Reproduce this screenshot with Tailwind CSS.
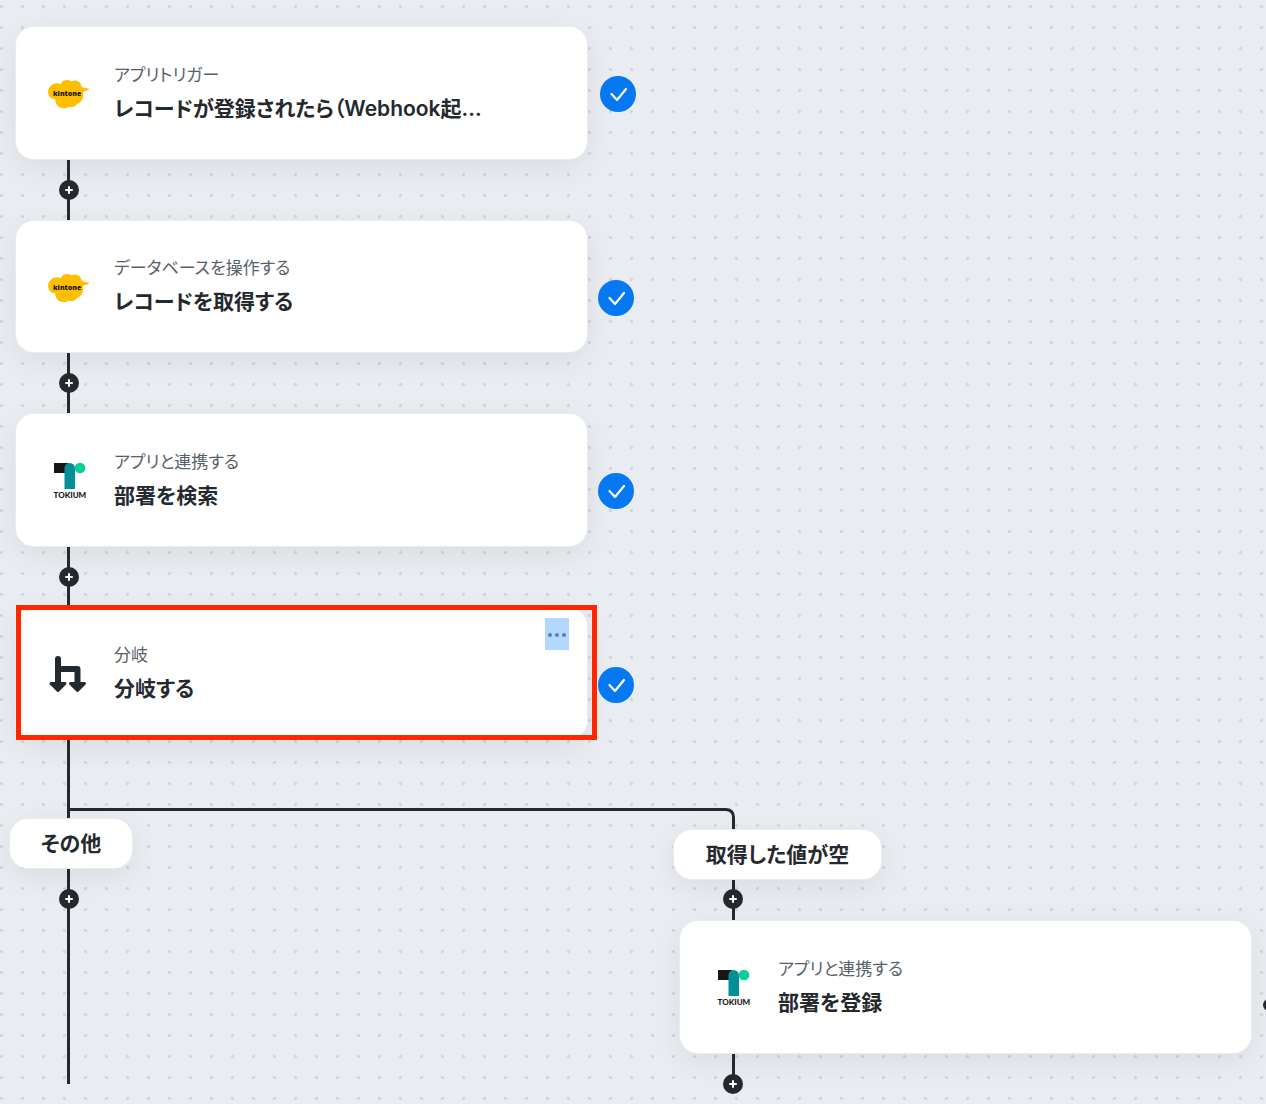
<!DOCTYPE html>
<html lang="ja">
<head>
<meta charset="utf-8">
<meta name="viewport" content="width=device-width, initial-scale=1">
<title>フロー</title>
<script src="https://cdn.jsdelivr.net/npm/@tailwindcss/browser@4"></script>
</head>
<body class="bg-[#e9ecf1]">
<svg class="hidden" aria-hidden="true">
  <symbol id="kintone" viewBox="0 0 44 44">
    <g transform="translate(0 2)">
    <path fill="#ffbf00" d="M12.500 11.200C14 7.200 20 5.600 23.500 8.600C27.500 6 33 8.500 33.300 13.200C35.500 15.300 38 14.900 40.800 15.400C42 15.700 41 16.600 39.500 17.200C37.500 18 35.700 18.200 34.800 19C35.600 24 34.800 28.800 29 31C27.500 34.200 23.500 34.600 21 33.400C17 36.800 8.500 35.300 7.500 28.500C7.300 27.600 7.200 26.800 7.200 26.200C2 26.500-.4 21.500 .2 17.500C1 12.300 7.500 8.500 12.500 11.200Z"/>
    <text x="5" y="22.500" font-family="Open Sans, sans-serif" font-size="7" font-weight="800" fill="#1d1a10">kintone</text>
    </g>
  </symbol>
  <symbol id="tokium" viewBox="0 0 44 44">
    <path fill="#181614" d="M6 5h14v10H6z"/>
    <path fill="#028f98" d="M16.500 31V10.200a5.250 5.250 0 0 1 10.500 0V31z"/>
    <circle cx="32" cy="10" r="5.300" fill="#06cf9a"/>
    <text x="5.500" y="40" font-family="Lato, sans-serif" font-size="8" font-weight="900" fill="#181614">TOKIUM</text>
  </symbol>
  <symbol id="branch" viewBox="0 0 40 40">
    <path fill="none" stroke="#24292e" stroke-width="6" stroke-linecap="round" d="M10 5v25"/>
    <path fill="none" stroke="#24292e" stroke-width="6" stroke-linejoin="round" d="M10 15h19.500v15"/>
    <path fill="#24292e" stroke="#24292e" stroke-width="3" stroke-linejoin="round" d="M3 29.500h14L10 36.500zM22.500 29.500h14l-7 7z"/>
  </symbol>
  <symbol id="plus" viewBox="0 0 20 20">
    <circle cx="10" cy="10" r="10" fill="#24292e"/>
    <path stroke="#fff" stroke-width="2" stroke-linecap="round" d="M10 7v6M7 10h6"/>
  </symbol>
  <symbol id="check" viewBox="0 0 36 36">
    <circle cx="18" cy="18" r="18" fill="#0678f2"/>
    <path fill="none" stroke="#fff" stroke-width="2.200" stroke-linecap="round" stroke-linejoin="round" d="M11.500 18l5.500 6 9-11"/>
  </symbol>
</svg>

<main class="relative min-h-screen overflow-hidden bg-[#e9ecf1] bg-[radial-gradient(circle_at_1.5px_6.5px,#d0d5db_1.2px,transparent_1.8px)] bg-[size:21px_21px] font-['Inter','Noto_Sans_CJK_JP',sans-serif] text-[#24292e] [font-feature-settings:'palt']">
  <!-- canvas extent -->
  <div class="h-[1104px]"></div>

  <!-- steps -->
  <article class="absolute left-4 top-[27px] flex h-[132px] w-[571px] items-center gap-[22px] rounded-[18px] bg-white px-8 shadow-[0_0_0_1px_#e9ecef,0_8px_32px_rgba(0,0,0,0.07)]">
    <svg class="size-[44px] shrink-0"><use href="#kintone"/></svg>
    <div class="min-w-0 pt-[3px]">
      <p class="text-[17px] leading-7 text-[#57606a]">アプリトリガー</p>
      <h2 class="truncate text-[21px] leading-10 font-semibold">レコードが登録されたら（Webhook起...</h2>
    </div>
  </article>
  <article class="absolute left-4 top-[221px] flex h-[131px] w-[571px] items-center gap-[22px] rounded-[18px] bg-white px-8 shadow-[0_0_0_1px_#e9ecef,0_8px_32px_rgba(0,0,0,0.07)]">
    <svg class="size-[44px] shrink-0"><use href="#kintone"/></svg>
    <div class="min-w-0 pt-[3px]">
      <p class="text-[17px] leading-7 text-[#57606a]">データベースを操作する</p>
      <h2 class="truncate text-[21px] leading-10 font-semibold">レコードを取得する</h2>
    </div>
  </article>
  <article class="absolute left-4 top-[414px] flex h-[132px] w-[571px] items-center gap-[22px] rounded-[18px] bg-white px-8 shadow-[0_0_0_1px_#e9ecef,0_8px_32px_rgba(0,0,0,0.07)]">
    <svg class="size-[44px] shrink-0"><use href="#tokium"/></svg>
    <div class="min-w-0 pt-[3px]">
      <p class="text-[17px] leading-7 text-[#57606a]">アプリと連携する</p>
      <h2 class="truncate text-[21px] leading-10 font-semibold">部署を検索</h2>
    </div>
  </article>
  <article class="absolute left-4 top-[608px] flex h-[131px] w-[571px] items-center gap-[22px] rounded-[18px] bg-white px-8 shadow-[0_0_0_1px_#e9ecef,0_8px_32px_rgba(0,0,0,0.07)]">
    <div class="flex size-[44px] shrink-0 items-center"><svg class="size-10"><use href="#branch"/></svg></div>
    <div class="min-w-0 pt-[3px]">
      <p class="text-[17px] leading-7 text-[#57606a]">分岐</p>
      <h2 class="truncate text-[21px] leading-10 font-semibold">分岐する</h2>
    </div>
    <button type="button" aria-label="メニュー" class="absolute right-[18px] top-[10px] flex h-8 w-6 items-center justify-center gap-[3px] bg-[#b3d7ff] pt-0.5">
      <span class="size-1 rounded-full bg-[#5a80ac]"></span><span class="size-1 rounded-full bg-[#5a80ac]"></span><span class="size-1 rounded-full bg-[#5a80ac]"></span>
    </button>
  </article>
  <article class="absolute left-[680px] top-[921px] flex h-[132px] w-[571px] items-center gap-[22px] rounded-[18px] bg-white px-8 shadow-[0_0_0_1px_#e9ecef,0_8px_32px_rgba(0,0,0,0.07)]">
    <svg class="size-[44px] shrink-0"><use href="#tokium"/></svg>
    <div class="min-w-0 pt-[3px]">
      <p class="text-[17px] leading-7 text-[#57606a]">アプリと連携する</p>
      <h2 class="truncate text-[21px] leading-10 font-semibold">部署を登録</h2>
    </div>
  </article>

  <!-- connectors -->
  <svg class="absolute left-0 top-0 h-[1104px] w-[1280px]" fill="none" stroke="#24292e" stroke-width="3" aria-hidden="true">
    <path d="M68.500 160V220M68.500 353V413M68.500 547V607M68.500 740V1084M68.500 809.500H725.500Q733.500 809.500 733.500 817.500V920M733.500 1054V1084"/>
    <circle cx="1269" cy="1005" r="6" fill="#24292e" stroke="none"/>
  </svg>

  <!-- branch labels -->
  <div class="absolute left-[10px] top-[819px] flex h-[49px] w-[122px] items-center justify-center rounded-[18px] bg-white text-[21px] font-semibold shadow-[0_0_0_1px_#e9ecef,0_8px_32px_rgba(0,0,0,0.07)]">その他</div>
  <div class="absolute left-[674px] top-[830px] flex h-[49px] w-[207px] items-center justify-center rounded-[18px] bg-white text-[21px] font-semibold shadow-[0_0_0_1px_#e9ecef,0_8px_32px_rgba(0,0,0,0.07)]">取得した値が空</div>

  <!-- add-step buttons -->
  <button type="button" aria-label="追加" class="absolute left-[59px] top-[180px]"><svg class="size-5"><use href="#plus"/></svg></button>
  <button type="button" aria-label="追加" class="absolute left-[59px] top-[373px]"><svg class="size-5"><use href="#plus"/></svg></button>
  <button type="button" aria-label="追加" class="absolute left-[59px] top-[567px]"><svg class="size-5"><use href="#plus"/></svg></button>
  <button type="button" aria-label="追加" class="absolute left-[59px] top-[889px]"><svg class="size-5"><use href="#plus"/></svg></button>
  <button type="button" aria-label="追加" class="absolute left-[723px] top-[889px]"><svg class="size-5"><use href="#plus"/></svg></button>
  <button type="button" aria-label="追加" class="absolute left-[723px] top-[1074px]"><svg class="size-5"><use href="#plus"/></svg></button>

  <!-- highlight and completion marks -->
  <div class="pointer-events-none absolute left-4 top-[605px] h-[135px] w-[581px] border-5 border-[#ff2600]"></div>
  <svg class="absolute left-[600px] top-[76px] size-9" role="img" aria-label="完了"><use href="#check"/></svg>
  <svg class="absolute left-[598px] top-[280px] size-9" role="img" aria-label="完了"><use href="#check"/></svg>
  <svg class="absolute left-[598px] top-[473px] size-9" role="img" aria-label="完了"><use href="#check"/></svg>
  <svg class="absolute left-[598px] top-[667px] size-9" role="img" aria-label="完了"><use href="#check"/></svg>
</main>
</body>
</html>
